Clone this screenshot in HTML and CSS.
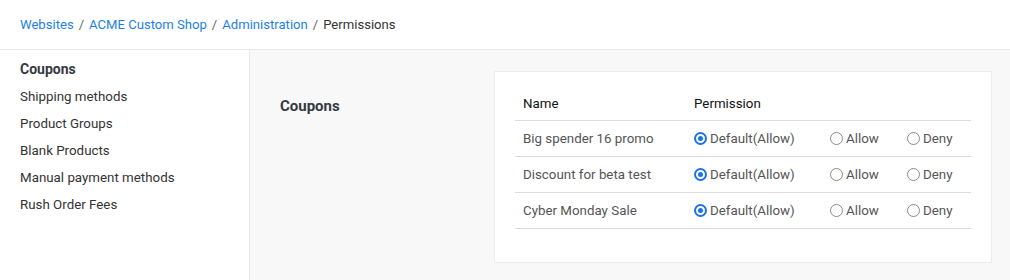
FILE: index.html
```html
<!DOCTYPE html>
<html>
<head>
<meta charset="utf-8">
<link rel="stylesheet" href="styles.css">
</head>
<body>
<header class="topbar">
  <nav class="crumbs">
    <a href="#">Websites</a><span class="sep">/</span><a href="#">ACME Custom Shop</a><span class="sep">/</span><a href="#">Administration</a><span class="sep">/</span><span class="current">Permissions</span>
  </nav>
</header>
<div class="layout">
  <aside class="sidebar">
    <ul class="menu">
      <li class="active">Coupons</li>
      <li>Shipping methods</li>
      <li>Product Groups</li>
      <li>Blank Products</li>
      <li>Manual payment methods</li>
      <li>Rush Order Fees</li>
    </ul>
  </aside>
  <main class="main">
    <h2 class="section-title">Coupons</h2>
    <section class="card">
      <table class="perm-table">
        <thead>
          <tr><th class="col-name">Name</th><th colspan="3">Permission</th></tr>
        </thead>
        <tbody>
          <tr>
            <td class="col-name">Big spender 16 promo</td>
            <td class="col-default"><span class="radio checked"></span>Default(Allow)</td>
            <td class="col-allow"><span class="radio"></span>Allow</td>
            <td class="col-deny"><span class="radio"></span>Deny</td>
          </tr>
          <tr>
            <td class="col-name">Discount for beta test</td>
            <td class="col-default"><span class="radio checked"></span>Default(Allow)</td>
            <td class="col-allow"><span class="radio"></span>Allow</td>
            <td class="col-deny"><span class="radio"></span>Deny</td>
          </tr>
          <tr>
            <td class="col-name">Cyber Monday Sale</td>
            <td class="col-default"><span class="radio checked"></span>Default(Allow)</td>
            <td class="col-allow"><span class="radio"></span>Allow</td>
            <td class="col-deny"><span class="radio"></span>Deny</td>
          </tr>
        </tbody>
      </table>
    </section>
  </main>
</div>
</body>
</html>
```
FILE: styles.css
```css
* { box-sizing: border-box; }
html, body { margin: 0; padding: 0; }
body {
  font-family: Roboto, "Liberation Sans", sans-serif;
  font-size: 13px;
  color: #333;
  background: #fff;
  height: 280px;
  overflow: hidden;
}
.topbar {
  height: 50px;
  border-bottom: 1px solid #e9e9e9;
  padding: 17px 20px 0;
}
.crumbs { line-height: 16px; font-size: 13.1px; }
.crumbs a { color: #1e7fe8; text-decoration: none; }
.crumbs .sep { color: #666; margin: 0 5px; }
.crumbs .current { color: #333; }
.layout {
  display: flex;
  height: 230px;
}
.sidebar {
  width: 250px;
  border-right: 1px solid #e9e9e9;
  padding: 6px 20px 0;
}
.menu { list-style: none; margin: 0; padding: 0; }
.menu li { line-height: 27px; color: #333; font-size: 13.33px; }
.menu li.active { font-weight: 700; font-size: 14px; color: #343a40; }
.main {
  flex: 1;
  background: #f8f8f8;
  display: flex;
  padding: 21px 18px 0 30px;
  align-items: flex-start;
}
.section-title {
  width: 214px;
  margin: 0;
  padding-top: 26px;
  font-size: 15px;
  line-height: 18px;
  font-weight: 700;
  color: #343a40;
}
.card {
  flex: 1;
  background: #fff;
  border: 1px solid #ececec;
  padding: 20px 20px 33px;
}
.perm-table {
  width: 100%;
  border-collapse: collapse;
  font-size: 13.33px;
}
.perm-table th {
  text-align: left;
  font-weight: 400;
  color: #111;
  padding: 4px 8px 8px;
  line-height: 16px;
  border-bottom: 1px solid #ddd;
}
.perm-table td {
  height: 36px;
  padding: 0 8px;
  color: #555;
  border-bottom: 1px solid #ddd;
  vertical-align: middle;
  white-space: nowrap;
}
.col-name { width: 171px; }
.col-default { width: 136px; }
.col-allow { width: 77px; }
.radio {
  display: inline-block;
  width: 13px;
  height: 13px;
  border: 1.5px solid #8a8a8a;
  border-radius: 50%;
  vertical-align: -2px;
  margin-right: 3px;
  position: relative;
}
.radio.checked {
  border: 2px solid #1a73e8;
}
.radio.checked::after {
  content: "";
  position: absolute;
  left: 2px;
  top: 2px;
  width: 5px;
  height: 5px;
  border-radius: 50%;
  background: #1a73e8;
}
```
